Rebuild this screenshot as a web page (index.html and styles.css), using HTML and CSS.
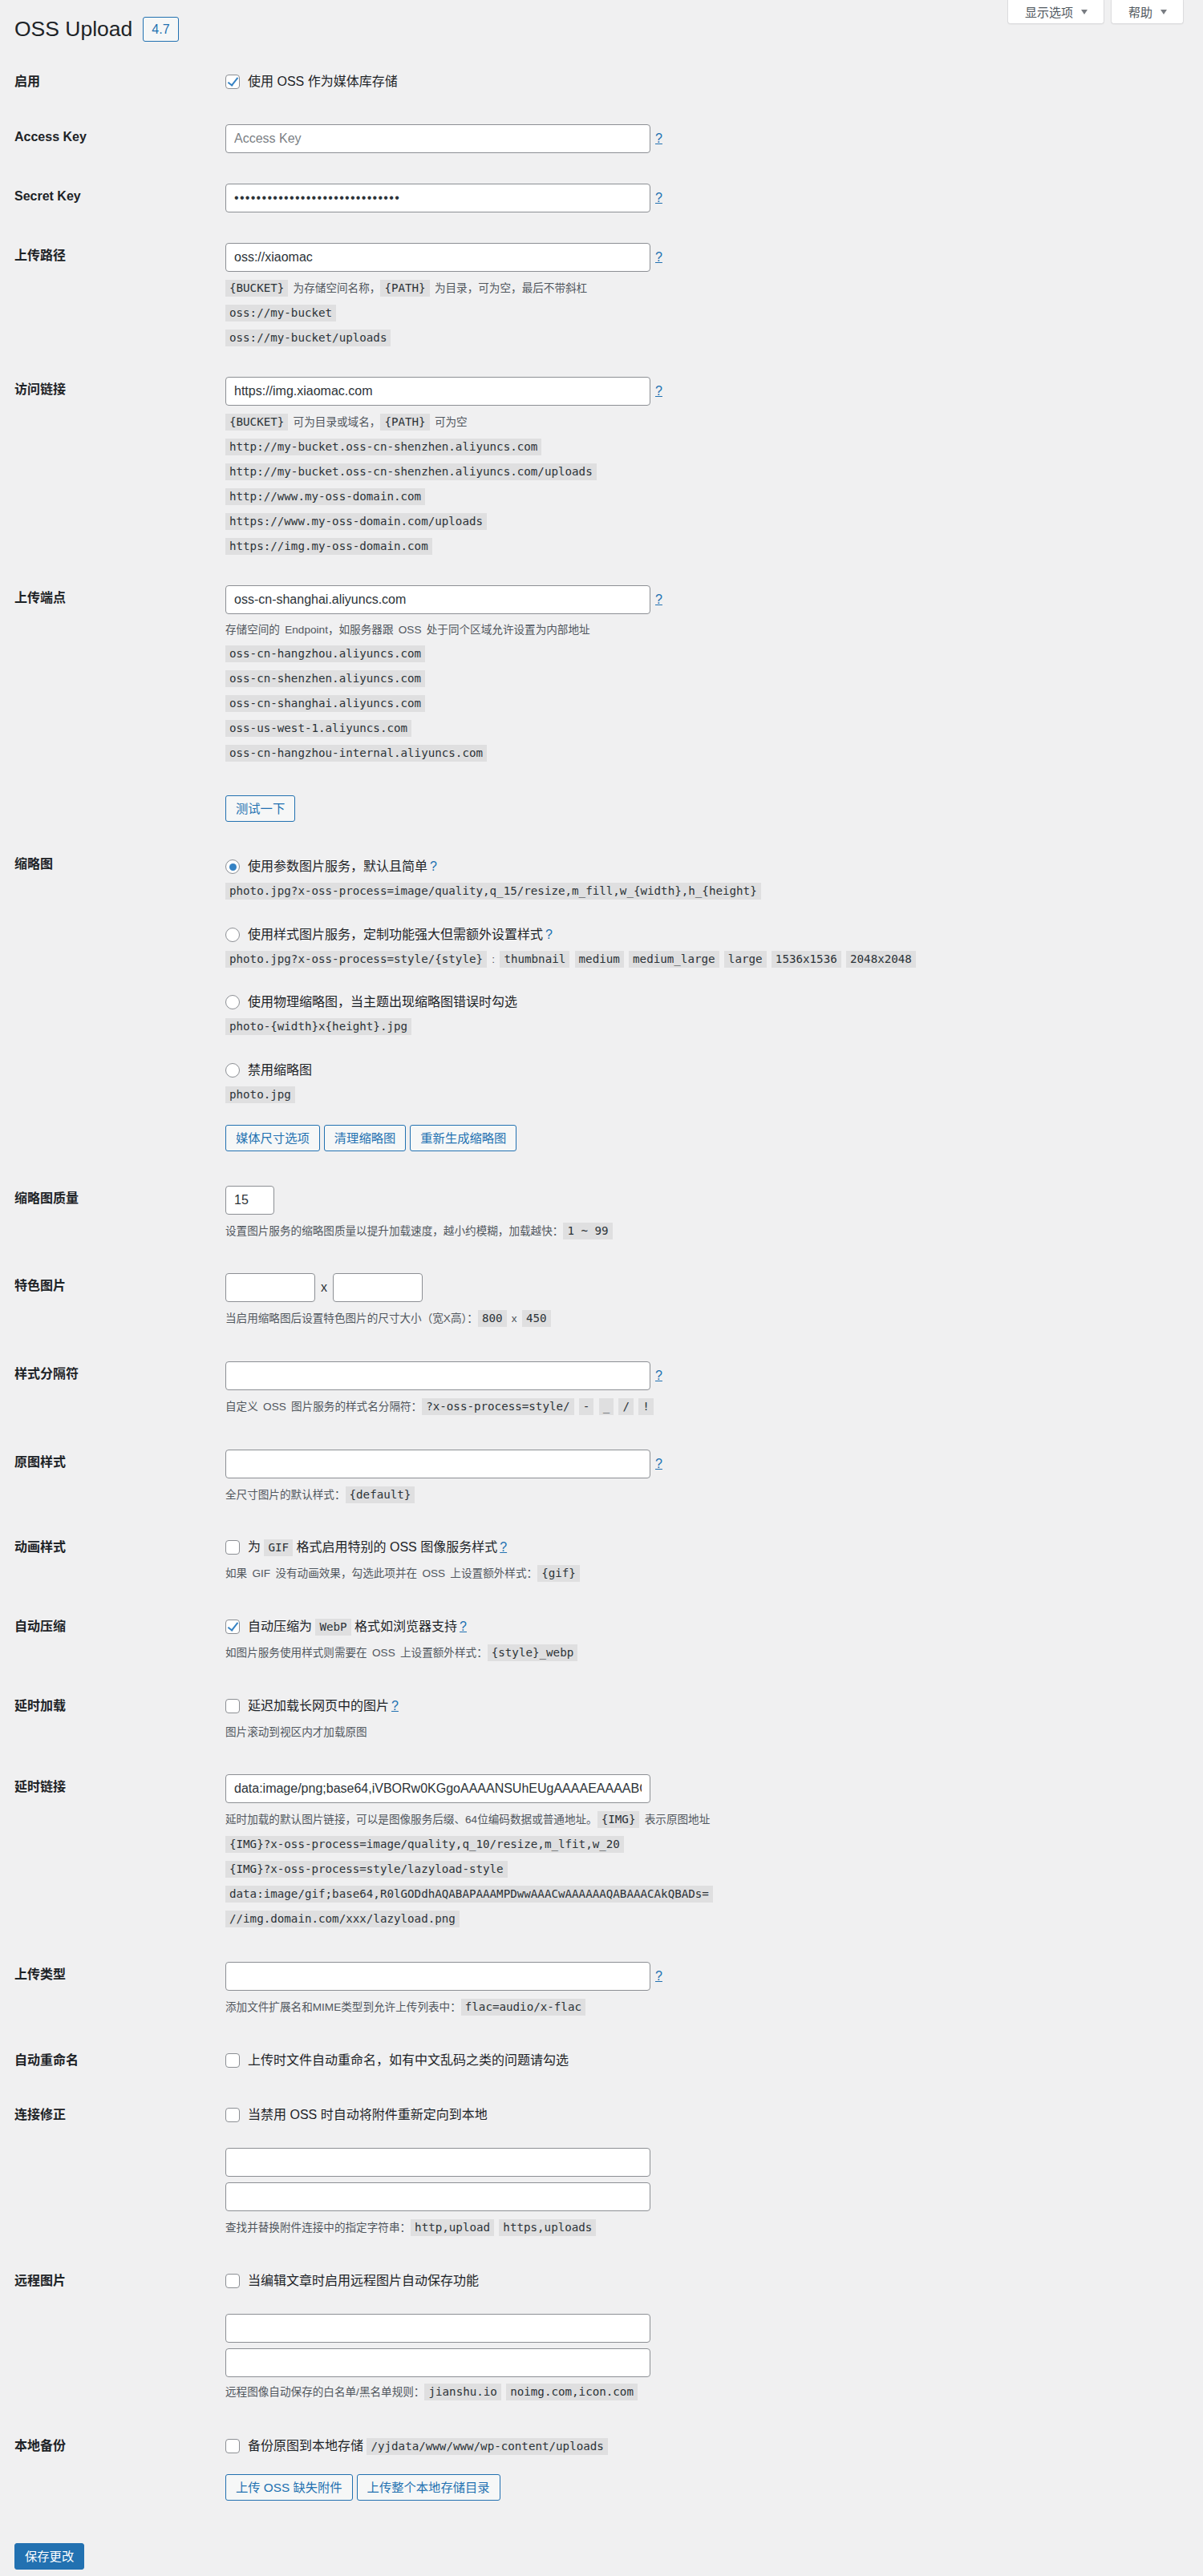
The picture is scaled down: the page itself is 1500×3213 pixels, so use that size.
FILE: index.html
```html
<!DOCTYPE html>
<html lang="zh-CN">
<head>
<meta charset="utf-8">
<title>OSS Upload</title>
<link rel="stylesheet" href="styles.css">
</head>
<body>
<div class="wrap">
  <div class="header">
    <div class="title"><h1>OSS Upload</h1><span class="version">4.7</span></div>
    <div class="screen-meta">
      <button class="meta-tab" type="button">显示选项<span class="caret"></span></button>
      <button class="meta-tab" type="button">帮助<span class="caret"></span></button>
    </div>
  </div>

  <form class="form">
    <div class="row">
      <div class="th c">启用</div>
      <div class="td">
        <label class="check"><input type="checkbox" checked><span>使用 OSS 作为媒体库存储</span></label>
      </div>
    </div>

    <div class="row">
      <div class="th">Access Key</div>
      <div class="td"><div class="field"><input class="text" type="text" placeholder="Access Key"><a class="help" href="#">?</a></div></div>
    </div>

    <div class="row">
      <div class="th">Secret Key</div>
      <div class="td"><div class="field"><input class="text pw" type="password" value="abcdefghijklmnopqrstuvwxyz0123"><a class="help" href="#">?</a></div></div>
    </div>

    <div class="row pb-14">
      <div class="th">上传路径</div>
      <div class="td">
        <div class="field"><input class="text" type="text" value="oss://xiaomac"><a class="help" href="#">?</a></div>
        <div class="desc">
          <div class="ln"><code>{BUCKET}</code> 为存储空间名称，<code>{PATH}</code> 为目录，可为空，最后不带斜杠</div>
          <div class="ln"><code>oss://my-bucket</code></div>
          <div class="ln"><code>oss://my-bucket/uploads</code></div>
        </div>
      </div>
    </div>

    <div class="row pb-14">
      <div class="th">访问链接</div>
      <div class="td">
        <div class="field"><input class="text" type="text" value="https://img.xiaomac.com"><a class="help" href="#">?</a></div>
        <div class="desc">
          <div class="ln"><code>{BUCKET}</code> 可为目录或域名，<code>{PATH}</code> 可为空</div>
          <div class="ln"><code>http://my-bucket.oss-cn-shenzhen.aliyuncs.com</code></div>
          <div class="ln"><code>http://my-bucket.oss-cn-shenzhen.aliyuncs.com/uploads</code></div>
          <div class="ln"><code>http://www.my-oss-domain.com</code></div>
          <div class="ln"><code>https://www.my-oss-domain.com/uploads</code></div>
          <div class="ln"><code>https://img.my-oss-domain.com</code></div>
        </div>
      </div>
    </div>

    <div class="row pb-22">
      <div class="th">上传端点</div>
      <div class="td">
        <div class="field"><input class="text" type="text" value="oss-cn-shanghai.aliyuncs.com"><a class="help" href="#">?</a></div>
        <div class="desc">
          <div class="ln t">存储空间的 Endpoint，如服务器跟 OSS 处于同个区域允许设置为内部地址</div>
          <div class="ln"><code>oss-cn-hangzhou.aliyuncs.com</code></div>
          <div class="ln"><code>oss-cn-shenzhen.aliyuncs.com</code></div>
          <div class="ln"><code>oss-cn-shanghai.aliyuncs.com</code></div>
          <div class="ln"><code>oss-us-west-1.aliyuncs.com</code></div>
          <div class="ln"><code>oss-cn-hangzhou-internal.aliyuncs.com</code></div>
        </div>
        <div class="btns mt-37"><button class="btn" type="button">测试一下</button></div>
      </div>
    </div>

    <div class="row pb-24">
      <div class="th r">缩略图</div>
      <div class="td">
        <div class="opts">
          <div class="opt">
            <label class="check"><input type="radio" name="thumb" checked><span>使用参数图片服务，默认且简单<a class="help plain" href="#">?</a></span></label>
            <div class="desc flush"><div class="ln"><code>photo.jpg?x-oss-process=image/quality,q_15/resize,m_fill,w_{width},h_{height}</code></div></div>
          </div>
          <div class="opt">
            <label class="check"><input type="radio" name="thumb"><span>使用样式图片服务，定制功能强大但需额外设置样式<a class="help plain" href="#">?</a></span></label>
            <div class="desc flush"><div class="ln"><code>photo.jpg?x-oss-process=style/{style}</code> : <code>thumbnail</code> <code>medium</code> <code>medium_large</code> <code>large</code> <code>1536x1536</code> <code>2048x2048</code></div></div>
          </div>
          <div class="opt">
            <label class="check"><input type="radio" name="thumb"><span>使用物理缩略图，当主题出现缩略图错误时勾选</span></label>
            <div class="desc flush"><div class="ln"><code>photo-{width}x{height}.jpg</code></div></div>
          </div>
          <div class="opt">
            <label class="check"><input type="radio" name="thumb"><span>禁用缩略图</span></label>
            <div class="desc flush"><div class="ln"><code>photo.jpg</code></div></div>
          </div>
        </div>
        <div class="btns mt-22">
          <button class="btn" type="button">媒体尺寸选项</button>
          <button class="btn" type="button">清理缩略图</button>
          <button class="btn" type="button">重新生成缩略图</button>
        </div>
      </div>
    </div>

    <div class="row pb-18">
      <div class="th">缩略图质量</div>
      <div class="td">
        <input class="text small" type="text" value="15">
        <div class="desc"><div class="ln">设置图片服务的缩略图质量以提升加载速度，越小约模糊，加载越快：<code>1 ~ 99</code></div></div>
      </div>
    </div>

    <div class="row">
      <div class="th">特色图片</div>
      <div class="td">
        <div class="field sizes"><input class="text size" type="text"><span class="times">x</span><input class="text size" type="text"></div>
        <div class="desc"><div class="ln">当启用缩略图后设置特色图片的尺寸大小（宽X高）：<code>800</code> x <code>450</code></div></div>
      </div>
    </div>

    <div class="row">
      <div class="th">样式分隔符</div>
      <div class="td">
        <div class="field"><input class="text" type="text"><a class="help" href="#">?</a></div>
        <div class="desc"><div class="ln">自定义 OSS 图片服务的样式名分隔符：<code>?x-oss-process=style/</code> <code>-</code> <code>_</code> <code>/</code> <code>!</code></div></div>
      </div>
    </div>

    <div class="row pb-16">
      <div class="th">原图样式</div>
      <div class="td">
        <div class="field"><input class="text" type="text"><a class="help" href="#">?</a></div>
        <div class="desc"><div class="ln">全尺寸图片的默认样式：<code>{default}</code></div></div>
      </div>
    </div>

    <div class="row pb-17">
      <div class="th c">动画样式</div>
      <div class="td">
        <label class="check"><input type="checkbox"><span>为 <code>GIF</code> 格式启用特别的 OSS 图像服务样式<a class="help" href="#">?</a></span></label>
        <div class="desc after-check"><div class="ln">如果 GIF 没有动画效果，勾选此项并在 OSS 上设置额外样式：<code>{gif}</code></div></div>
      </div>
    </div>

    <div class="row pb-17">
      <div class="th c">自动压缩</div>
      <div class="td">
        <label class="check"><input type="checkbox" checked><span>自动压缩为 <code>WebP</code> 格式如浏览器支持<a class="help" href="#">?</a></span></label>
        <div class="desc after-check"><div class="ln">如图片服务使用样式则需要在 OSS 上设置额外样式：<code>{style}_webp</code></div></div>
      </div>
    </div>

    <div class="row pb-17h">
      <div class="th c">延时加载</div>
      <div class="td">
        <label class="check"><input type="checkbox"><span>延迟加载长网页中的图片<a class="help" href="#">?</a></span></label>
        <div class="desc after-check"><div class="ln">图片滚动到视区内才加载原图</div></div>
      </div>
    </div>

    <div class="row">
      <div class="th">延时链接</div>
      <div class="td">
        <input class="text" type="text" value="data:image/png;base64,iVBORw0KGgoAAAANSUhEUgAAAAEAAAABCAYAAAAf">
        <div class="desc">
          <div class="ln">延时加载的默认图片链接，可以是图像服务后缀、64位编码数据或普通地址。<code>{IMG}</code> 表示原图地址</div>
          <div class="ln"><code>{IMG}?x-oss-process=image/quality,q_10/resize,m_lfit,w_20</code></div>
          <div class="ln"><code>{IMG}?x-oss-process=style/lazyload-style</code></div>
          <div class="ln"><code>data:image/gif;base64,R0lGODdhAQABAPAAAMPDwwAAACwAAAAAAQABAAACAkQBADs=</code></div>
          <div class="ln"><code>//img.domain.com/xxx/lazyload.png</code></div>
        </div>
      </div>
    </div>

    <div class="row pb-17">
      <div class="th">上传类型</div>
      <div class="td">
        <div class="field"><input class="text" type="text"><a class="help" href="#">?</a></div>
        <div class="desc"><div class="ln">添加文件扩展名和MIME类型到允许上传列表中：<code>flac=audio/x-flac</code></div></div>
      </div>
    </div>

    <div class="row pb-19h">
      <div class="th c">自动重命名</div>
      <div class="td">
        <label class="check"><input type="checkbox"><span>上传时文件自动重命名，如有中文乱码之类的问题请勾选</span></label>
      </div>
    </div>

    <div class="row pb-17h">
      <div class="th c">连接修正</div>
      <div class="td">
        <label class="check"><input type="checkbox"><span>当禁用 OSS 时自动将附件重新定向到本地</span></label>
        <div class="inputs">
          <input class="text" type="text">
          <input class="text" type="text">
        </div>
        <div class="desc"><div class="ln">查找并替换附件连接中的指定字符串：<code>http,upload</code> <code>https,uploads</code></div></div>
      </div>
    </div>

    <div class="row pb-18">
      <div class="th c">远程图片</div>
      <div class="td">
        <label class="check"><input type="checkbox"><span>当编辑文章时启用远程图片自动保存功能</span></label>
        <div class="inputs">
          <input class="text" type="text">
          <input class="text" type="text">
        </div>
        <div class="desc tight"><div class="ln">远程图像自动保存的白名单/黑名单规则：<code>jianshu.io</code> <code>noimg.com,icon.com</code></div></div>
      </div>
    </div>

    <div class="row">
      <div class="th c">本地备份</div>
      <div class="td">
        <label class="check"><input type="checkbox"><span>备份原图到本地存储 <code>/yjdata/www/www/wp-content/uploads</code></span></label>
        <div class="btns mt-19">
          <button class="btn" type="button">上传 OSS 缺失附件</button>
          <button class="btn" type="button">上传整个本地存储目录</button>
        </div>
      </div>
    </div>

    <div class="submit"><button class="btn primary" type="button">保存更改</button></div>
  </form>
</div>
</body>
</html>
```

FILE: styles.css
```css
* {
  box-sizing: border-box;
}

html,
body {
  margin: 0;
  padding: 0;
}

body {
  background: #f0f0f1;
  color: #1d2327;
  font-family: "Liberation Sans", "Noto Sans CJK SC", sans-serif;
  font-size: 16px;
}

.wrap {
  padding: 0 24px 0 18px;
}

/* header */
.header {
  display: flex;
  justify-content: space-between;
  align-items: flex-start;
  height: 52px;
}

.title {
  display: flex;
  align-items: center;
  margin-top: 20px;
  height: 32px;
}

.title h1 {
  margin: 0;
  font-size: 26.5px;
  font-weight: 400;
  line-height: 32px;
  color: #1d2327;
}

.version {
  margin-left: 13px;
  height: 31px;
  padding: 0 10px;
  border: 1px solid #2271b1;
  border-radius: 3px;
  background: #f6f7f7;
  color: #2271b1;
  font-size: 16px;
  line-height: 29px;
}

.screen-meta {
  display: flex;
  gap: 8px;
}

.meta-tab {
  display: flex;
  align-items: center;
  height: 30px;
  padding: 0 20px 0 21px;
  background: #fff;
  border: 1px solid #dcdcde;
  border-top: 0;
  border-radius: 0 0 4px 4px;
  color: #50575e;
  font-family: inherit;
  font-size: 15px;
  box-shadow: 0 1px 1px rgba(0, 0, 0, 0.04);
}

.caret {
  width: 0;
  height: 0;
  margin-left: 10px;
  border-left: 4px solid transparent;
  border-right: 4px solid transparent;
  border-top: 6px solid #787c82;
}

/* form table */
.form {
  margin-top: 15.5px;
}

.row {
  display: grid;
  grid-template-columns: 263px 1fr;
  padding: 19px 0;
}

.row.pb-14 { padding-bottom: 14px; }
.row.pb-16 { padding-bottom: 16px; }
.row.pb-17 { padding-bottom: 17px; }
.row.pb-17h { padding-bottom: 17.5px; }
.row.pb-18 { padding-bottom: 18px; }
.row.pb-19h { padding-bottom: 19.5px; }
.row.pb-22 { padding-bottom: 22.5px; }
.row.pb-24 { padding-bottom: 24px; }

.th {
  font-weight: 700;
  line-height: 32px;
  color: #1d2327;
}

.th.c {
  line-height: 30px;
}

.th.r {
  line-height: 24px;
}

.td {
  min-width: 0;
}

.field {
  display: flex;
  align-items: center;
  gap: 6px;
}

.text {
  display: block;
  width: 530px;
  height: 36px;
  margin: 0;
  padding: 0 10px;
  border: 1px solid #8c8f94;
  border-radius: 4px;
  background: #fff;
  color: #2c3338;
  font-family: inherit;
  font-size: 16px;
  box-shadow: none;
}

.text::placeholder {
  color: #7b7f85;
}

.text.pw {
  letter-spacing: 1.3px;
}

.text.small {
  width: 61px;
}

.text.size {
  width: 112px;
}

.sizes {
  gap: 0;
}

.times {
  margin: 0 7px;
  color: #2c3338;
  font-size: 16px;
}

.help {
  color: #2271b1;
  text-decoration: underline;
  font-size: 16px;
}

.help.plain {
  text-decoration: none;
  margin-left: 3px;
}

.check .help {
  margin-left: 3px;
}

/* checkbox & radio */
.check {
  display: flex;
  align-items: center;
  gap: 10px;
  height: 30px;
  line-height: 30px;
  white-space: nowrap;
  color: #1d2327;
}

.check input {
  -webkit-appearance: none;
  appearance: none;
  position: relative;
  flex: none;
  width: 18px;
  height: 18px;
  margin: 0;
  border: 1px solid #8c8f94;
  border-radius: 4px;
  background: #fff;
}

.check input[type="radio"] {
  border-radius: 50%;
}

.check input[type="checkbox"]:checked::before {
  content: "";
  position: absolute;
  left: 5px;
  top: 0px;
  width: 5px;
  height: 11px;
  border-right: 2.5px solid #3582c4;
  border-bottom: 2.5px solid #3582c4;
  transform: rotate(38deg);
}

.check input[type="radio"]:checked::before {
  content: "";
  position: absolute;
  left: 3.5px;
  top: 3.5px;
  width: 9px;
  height: 9px;
  border-radius: 50%;
  background: #3582c4;
}

/* descriptions */
.desc {
  margin-top: 5px;
  font-size: 13.6px;
  color: #50575e;
  word-spacing: 2.5px;
}

.desc.flush {
  margin-top: 0;
}

.desc.after-check {
  margin-top: 2px;
}

.desc.tight {
  margin-top: 3.5px;
}

.ln {
  height: 31px;
  line-height: 31px;
  white-space: nowrap;
}

.ln.t {
  height: 29px;
  line-height: 29px;
}

code {
  font-family: "DejaVu Sans Mono", "Liberation Mono", monospace;
  font-size: 14.2px;
  padding: 2px 5px 3px;
  background: rgba(0, 0, 0, 0.07);
  color: #2c3338;
  word-spacing: 0;
}

/* thumbnail options */
.opts {
  display: flex;
  flex-direction: column;
  gap: 23.5px;
}

/* inputs stack */
.inputs {
  display: flex;
  flex-direction: column;
  gap: 7px;
  margin-top: 25.5px;
}

/* buttons */
.btns {
  display: flex;
  gap: 5px;
}

.mt-37 { margin-top: 37px; }
.mt-22 { margin-top: 22.5px; }
.mt-19 { margin-top: 19.5px; }

.btn {
  height: 33px;
  margin: 0;
  padding: 0 12px;
  border: 1px solid #2271b1;
  border-radius: 3px;
  background: #f6f7f7;
  color: #2271b1;
  font-family: inherit;
  font-size: 15.3px;
  line-height: 31px;
  white-space: nowrap;
}

.btn.primary {
  background: #2271b1;
  color: #fff;
}

.submit {
  margin-top: 34.5px;
  padding-bottom: 7px;
}
```
